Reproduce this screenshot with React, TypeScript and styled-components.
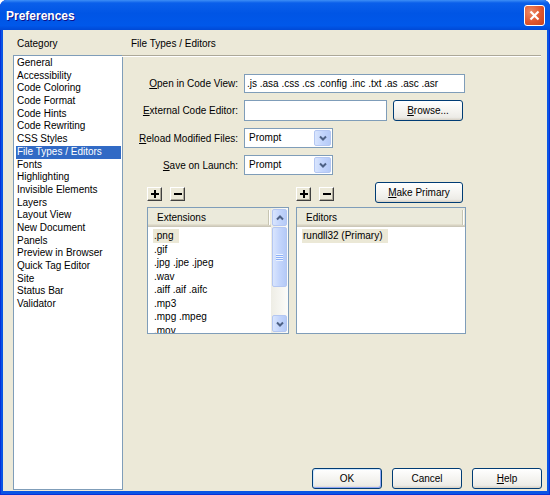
import React from 'react';
import styled, {createGlobalStyle, css} from 'styled-components';

const categories = [
    'General', 'Accessibility', 'Code Coloring', 'Code Format', 'Code Hints', 'Code Rewriting',
    'CSS Styles', 'File Types / Editors', 'Fonts', 'Highlighting', 'Invisible Elements', 'Layers',
    'Layout View', 'New Document', 'Panels', 'Preview in Browser', 'Quick Tag Editor', 'Site',
    'Status Bar', 'Validator',
];

const extensions = [
    '.png', '.gif', '.jpg .jpe .jpeg', '.wav', '.aiff .aif .aifc', '.mp3', '.mpg .mpeg', '.mov',
];

const Chevron = ({up = false}: {up?: boolean}) => (
    <svg width="8" height="6" viewBox="0 0 8 6">
        <path
            d={up ? 'M1 4.5 L4 1.5 L7 4.5' : 'M1 1.5 L4 4.5 L7 1.5'}
            fill="none"
            stroke="#4d6185"
            strokeWidth="2"
        />
    </svg>
);

const PlusGlyph = () => (
    <svg width="8" height="8" viewBox="0 0 8 8">
        <rect x="3" y="0" width="2" height="8" fill="#000"/>
        <rect x="0" y="3" width="8" height="2" fill="#000"/>
    </svg>
);

const MinusGlyph = () => (
    <svg width="8" height="8" viewBox="0 0 8 8">
        <rect x="0" y="3" width="8" height="2" fill="#000"/>
    </svg>
);

const App = () => (
    <>
        <GlobalStyle/>
        <Window>
            <TitleBar>
                <Title>Preferences</Title>
                <CloseButton>
                    <svg width="11" height="11" viewBox="0 0 11 11">
                        <path d="M1.5 1.5 L9.5 9.5 M9.5 1.5 L1.5 9.5" stroke="#fff" strokeWidth="2.2"/>
                    </svg>
                </CloseButton>
            </TitleBar>

            <Body>
                <Sidebar>
                    <SectionTitle>Category</SectionTitle>
                    <CategoryList>
                        {categories.map(name => (
                            <CategoryItem key={name} selected={name === 'File Types / Editors'}>
                                {name}
                            </CategoryItem>
                        ))}
                    </CategoryList>
                </Sidebar>

                <Main>
                    <PanelTitle>File Types / Editors</PanelTitle>
                    <Separator/>

                    <Form>
                        <FieldLabel><Key>O</Key>pen in Code View:</FieldLabel>
                        <TextInput
                            width={221}
                            height={19}
                            readOnly
                            value=".js .asa .css .cs .config .inc .txt .as .asc .asr"
                        />

                        <FieldLabel><Key>E</Key>xternal Code Editor:</FieldLabel>
                        <FieldRow>
                            <TextInput width={143} height={21} readOnly value=""/>
                            <XpButton width={70}><Key>B</Key>rowse...</XpButton>
                        </FieldRow>

                        <FieldLabel><Key>R</Key>eload Modified Files:</FieldLabel>
                        <SelectBox>
                            <SelectText>Prompt</SelectText>
                            <DropButton><Chevron/></DropButton>
                        </SelectBox>

                        <FieldLabel><Key>S</Key>ave on Launch:</FieldLabel>
                        <SelectBox>
                            <SelectText>Prompt</SelectText>
                            <DropButton><Chevron/></DropButton>
                        </SelectBox>
                    </Form>

                    <ListsArea>
                        <ListColumn width={142}>
                            <Toolbar>
                                <TinyButton><PlusGlyph/></TinyButton>
                                <TinyButton><MinusGlyph/></TinyButton>
                            </Toolbar>
                            <ListBox>
                                <ListMain>
                                    <ListHeader>
                                        <HeaderCell>Extensions</HeaderCell>
                                    </ListHeader>
                                    <ListRows>
                                        {extensions.map((ext, i) => (
                                            <ListRow key={ext}>
                                                <RowText active={i === 0}>{ext}</RowText>
                                            </ListRow>
                                        ))}
                                    </ListRows>
                                </ListMain>
                                <ScrollBar>
                                    <ScrollButton><Chevron up/></ScrollButton>
                                    <ScrollTrack>
                                        <ScrollThumb>
                                            <Grip/>
                                        </ScrollThumb>
                                    </ScrollTrack>
                                    <ScrollButton><Chevron/></ScrollButton>
                                </ScrollBar>
                            </ListBox>
                        </ListColumn>

                        <ListColumn width={170}>
                            <Toolbar>
                                <TinyButton><PlusGlyph/></TinyButton>
                                <TinyButton><MinusGlyph/></TinyButton>
                                <PrimaryButton width={88}><Key>M</Key>ake Primary</PrimaryButton>
                            </Toolbar>
                            <ListBox>
                                <ListMain>
                                    <ListHeader>
                                        <HeaderCell>Editors</HeaderCell>
                                    </ListHeader>
                                    <ListRows>
                                        <ListRow>
                                            <RowText active>rundll32 (Primary)</RowText>
                                        </ListRow>
                                    </ListRows>
                                </ListMain>
                            </ListBox>
                        </ListColumn>
                    </ListsArea>

                    <Spacer/>

                    <ButtonRow>
                        <XpButton width={70} isDefault>OK</XpButton>
                        <XpButton width={70}>Cancel</XpButton>
                        <XpButton width={70}><Key>H</Key>elp</XpButton>
                    </ButtonRow>
                </Main>
            </Body>
        </Window>
    </>
);

export default App;

const GlobalStyle = createGlobalStyle`
    html, body {
        margin: 0;
        padding: 0;
        background: #fff;
    }

    body {
        font-family: Tahoma, "Liberation Sans", Arial, sans-serif;
        font-size: 10px;
        color: #000;
    }

    * {
        box-sizing: border-box;
    }
`;

const Window = styled.div`
    width: 550px;
    height: 495px;
    display: flex;
    flex-direction: column;
    background: #0a55e4;
    border-radius: 7px 7px 0 0;
    box-shadow: inset 1px 0 #0831d9, inset -1px 0 #0831d9, inset 0 -1px #0831d9;
    overflow: hidden;
`;

const TitleBar = styled.div`
    height: 30px;
    flex: none;
    display: flex;
    align-items: center;
    justify-content: space-between;
    padding: 0 5px 0 6px;
    background: linear-gradient(180deg, #3d8ef6 0, #0a5fea 3px, #0055e5 45%, #0058ea 85%, #0049d6 100%);
`;

const Title = styled.span`
    color: #fff;
    font-family: "Liberation Sans", Arial, sans-serif;
    font-weight: bold;
    font-size: 12px;
    text-shadow: 1px 1px #0f1089;
    margin-top: 1px;
`;

const CloseButton = styled.div`
    width: 21px;
    height: 21px;
    display: flex;
    align-items: center;
    justify-content: center;
    border: 1px solid #fff;
    border-radius: 3px;
    background: radial-gradient(circle at 30% 30%, #ec8a66 0%, #e0562e 55%, #c8431c 100%);
`;

const Body = styled.div`
    flex: 1;
    display: flex;
    margin: 0 3px 4px;
    padding: 0 5px 1px 10px;
    background: #ece9d8;
`;

const Sidebar = styled.div`
    width: 110px;
    flex: none;
    display: flex;
    flex-direction: column;
`;

const SectionTitle = styled.div`
    height: 25px;
    display: flex;
    align-items: flex-end;
    padding: 0 0 5px 4px;
    line-height: 13px;
`;

const CategoryList = styled.div`
    flex: 1;
    border: 1px solid #7f9db9;
    background: #fff;
    padding-top: 1px;
`;

const CategoryItem: any = styled.div`
    height: 12.7px;
    line-height: 12.7px;
    margin: 0 1px 0 2px;
    padding-left: 1px;
    white-space: nowrap;

    ${(props: any) => props.selected && css`
        background: #316ac5;
        color: #fff;
    `}
`;

const Main = styled.div`
    flex: 1;
    display: flex;
    flex-direction: column;
`;

const PanelTitle = styled(SectionTitle)`
    padding-left: 8px;
`;

const Separator = styled.div`
    height: 2px;
    margin: 0 1px 0 -1px;
    border-top: 1px solid #aca899;
    border-bottom: 1px solid #fff;
`;

const Form = styled.div`
    display: grid;
    grid-template-columns: 115px auto;
    column-gap: 6px;
    row-gap: 7px;
    align-items: center;
    margin-top: 17px;
`;

const FieldLabel = styled.label`
    text-align: right;
    white-space: nowrap;
`;

const Key = styled.span`
    text-decoration: underline;
`;

const FieldRow = styled.div`
    display: flex;
    gap: 6px;
    align-items: center;
`;

const TextInput: any = styled.input`
    width: ${(props: any) => props.width}px;
    height: ${(props: any) => props.height}px;
    border: 1px solid #7f9db9;
    padding: 0 2px;
    font: inherit;
    color: #000;
    background: #fff;
    outline: none;
`;

const SelectBox = styled.div`
    width: 89px;
    height: 20px;
    display: flex;
    border: 1px solid #7f9db9;
    background: #fff;
    padding: 1px;
`;

const SelectText = styled.span`
    flex: 1;
    line-height: 16px;
    padding-left: 3px;
`;

const blueButton = css`
    display: flex;
    align-items: center;
    justify-content: center;
    border: 1px solid #b4c7f2;
    border-radius: 2px;
    background: linear-gradient(90deg, #d9e5fd 0%, #c3d5fc 50%, #b5caf7 100%);
`;

const DropButton = styled.div`
    ${blueButton};
    width: 17px;
`;

const ListsArea = styled.div`
    display: flex;
    gap: 7px;
    padding-left: 24px;
    margin-top: 7px;
`;

const ListColumn: any = styled.div`
    width: ${(props: any) => props.width}px;
    display: flex;
    flex-direction: column;
    gap: 4px;
`;

const Toolbar = styled.div`
    height: 21px;
    display: flex;
    align-items: center;
    gap: 8px;
`;

const TinyButton = styled.div`
    width: 15px;
    height: 14px;
    margin-top: 2px;
    display: flex;
    align-items: center;
    justify-content: center;
    background: #ece9d8;
    border: 1px solid;
    border-color: #fff #404040 #404040 #fff;
    box-shadow: inset -1px -1px #aca899;
`;

const ListBox = styled.div`
    height: 127px;
    display: flex;
    border: 1px solid #7f9db9;
    background: #fff;
`;

const ListMain = styled.div`
    flex: 1;
    display: flex;
    flex-direction: column;
    overflow: hidden;
`;

const ListHeader = styled.div`
    height: 19px;
    flex: none;
    display: flex;
    background: #ebeadb;
    box-shadow: inset 0 -1px #cbc7b8, inset 0 -2px #d6d2c2, inset 0 -3px #e2decd;
`;

const HeaderCell = styled.div`
    flex: 1;
    line-height: 17px;
    padding-left: 9px;
    margin: 0 2px 0 0;
    border-right: 1px solid #c7c5b2;
    box-shadow: 1px 0 #fff;
    height: 15px;
    align-self: center;
    display: flex;
    align-items: center;
`;

const ListRows = styled.div`
    padding: 2px 0 0 5px;
`;

const ListRow = styled.div`
    height: 13.5px;
    line-height: 13.5px;
    white-space: nowrap;
`;

const RowText: any = styled.span`
    display: inline-block;
    padding: 0 6px 0 1px;

    ${(props: any) => props.active && css`
        background: #ebe8d6;
    `}
`;

const ScrollBar = styled.div`
    width: 17px;
    flex: none;
    display: flex;
    flex-direction: column;
    background: linear-gradient(90deg, #eeede5 0%, #fcfcfa 100%);
`;

const ScrollButton = styled.div`
    ${blueButton};
    height: 17px;
    margin: 1px;
    flex: none;
`;

const ScrollTrack = styled.div`
    flex: 1;
    padding: 0 1px;
`;

const ScrollThumb = styled.div`
    ${blueButton};
    height: 60px;
`;

const Grip = styled.div`
    width: 7px;
    height: 7px;
    background: repeating-linear-gradient(180deg, #eef4fe 0 1px, #8cb0f8 1px 2px);
`;

const Spacer = styled.div`
    flex: 1;
`;

const ButtonRow = styled.div`
    display: flex;
    justify-content: flex-end;
    gap: 10px;
    margin-bottom: 1px;
`;

const XpButton: any = styled.div`
    width: ${(props: any) => props.width}px;
    height: 21px;
    display: flex;
    align-items: center;
    justify-content: center;
    border: 1px solid #003c74;
    border-radius: 3px;
    background: linear-gradient(180deg, #fff 0%, #f3f2ee 60%, #ecebe6 86%, #d6d0c5 100%);
    white-space: nowrap;

    ${(props: any) => props.isDefault && css`
        box-shadow: inset -1px -1px #91a7f4, inset 1px 1px #cee7ff;
    `}
`;

const PrimaryButton = styled(XpButton)`
    margin-left: auto;
    margin-right: 3px;
`;
